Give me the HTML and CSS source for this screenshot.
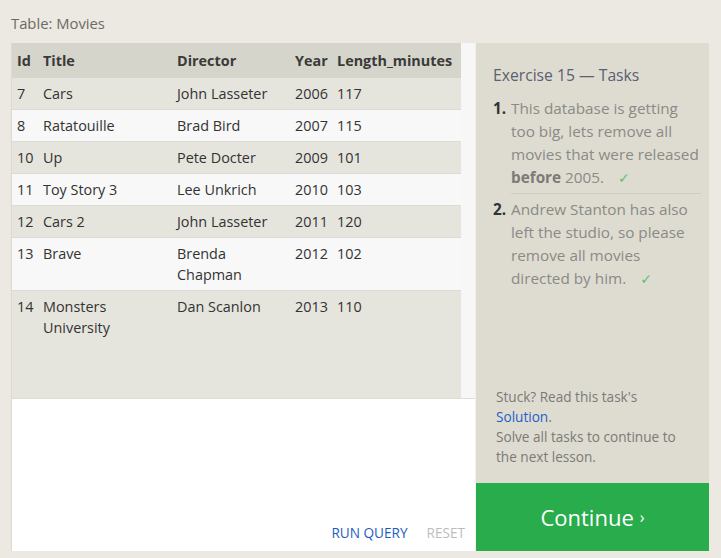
FILE: index.html
```html
<!DOCTYPE html>
<html>
<head>
<meta charset="utf-8">
<link rel="stylesheet" href="styles.css">
</head>
<body>
<div class="page">
  <div class="table-label">Table: Movies</div>
  <div class="main">
    <div class="left">
      <div class="table-area">
        <div class="table-scroll">
          <table class="movies">
            <colgroup>
              <col class="c-id"><col class="c-title"><col class="c-dir"><col class="c-year"><col class="c-len">
            </colgroup>
            <thead>
              <tr><th>Id</th><th>Title</th><th>Director</th><th>Year</th><th>Length_minutes</th></tr>
            </thead>
            <tbody>
              <tr class="odd"><td>7</td><td>Cars</td><td>John Lasseter</td><td>2006</td><td>117</td></tr>
              <tr class="even"><td>8</td><td>Ratatouille</td><td>Brad Bird</td><td>2007</td><td>115</td></tr>
              <tr class="odd"><td>10</td><td>Up</td><td>Pete Docter</td><td>2009</td><td>101</td></tr>
              <tr class="even"><td>11</td><td>Toy Story 3</td><td>Lee Unkrich</td><td>2010</td><td>103</td></tr>
              <tr class="odd"><td>12</td><td>Cars 2</td><td>John Lasseter</td><td>2011</td><td>120</td></tr>
              <tr class="even"><td>13</td><td>Brave</td><td>Brenda<br>Chapman</td><td>2012</td><td>102</td></tr>
              <tr class="odd last"><td>14</td><td>Monsters<br>University</td><td>Dan Scanlon</td><td>2013</td><td>110</td></tr>
            </tbody>
          </table>
        </div>
        <div class="scrollbar"></div>
      </div>
      <div class="editor">
        <div class="editor-actions">
          <span class="run">RUN QUERY</span>
          <span class="reset">RESET</span>
        </div>
      </div>
    </div>
    <div class="right">
      <div class="tasks">
        <h2 class="tasks-title">Exercise 15 — Tasks</h2>
        <ol class="task-list">
          <li class="task"><div class="num">1.</div><div class="task-text">This database is getting too big, lets remove all movies that were released <b>before</b> 2005. <span class="check">✓</span></div></li>
          <li class="task"><div class="num">2.</div><div class="task-text">Andrew Stanton has also left the studio, so please remove all movies <span>directed by him.</span> <span class="check">✓</span></div></li>
        </ol>
      </div>
      <div class="help">
        Stuck? Read this task's <span class="link">Solution</span>.<br>
        Solve all tasks to continue to the next lesson.
      </div>
      <div class="continue">Continue <span class="chev">›</span></div>
    </div>
  </div>
</div>
</body>
</html>
```

FILE: styles.css
```css
html, body {
  margin: 0;
  padding: 0;
}
body {
  background: #ece8e2;
  font-family: "Open Sans", "DejaVu Sans", sans-serif;
  color: #333;
  width: 721px;
  height: 558px;
  overflow: hidden;
}
.page {
  padding: 12px 12px 0 11px;
}
.table-label {
  font-size: 14.8px;
  color: #6b6b66;
  height: 31px;
  line-height: 22px;
}
.main {
  display: flex;
  width: 698px;
  height: 508px;
  border-left: 1px solid #dcd9d0;
  box-sizing: border-box;
}
.left {
  width: 463px;
  display: flex;
  flex-direction: column;
  border-right: 1px solid #f2f1ec;
}
.table-area {
  height: 355px;
  display: flex;
  background: #e6e5dd;
  border-bottom: 1px solid #dedcd4;
}
.table-scroll {
  width: 449px;
  background: #e6e5dd;
}
.scrollbar {
  width: 14px;
  background: #f7f7f7;
}
.movies {
  border-collapse: collapse;
  width: 449px;
  table-layout: fixed;
  font-size: 14.4px;
}
.c-id { width: 26px; }
.c-title { width: 134px; }
.c-dir { width: 118px; }
.c-year { width: 42px; }
.c-len { width: 129px; }
.movies th {
  background: #d6d5cb;
  text-align: left;
  font-weight: bold;
  color: #3a3a38;
  padding: 0 0 0 5px;
  height: 35px;
  white-space: nowrap;
}
.movies td {
  padding: 5px 0 5px 5px;
  line-height: 21px;
  vertical-align: top;
  color: #333;
  border-bottom: 1px solid #dcdbd4;
}
.movies tr.odd td { background: #e6e5dd; }
.movies tr.even td { background: #f8f8f8; }
.movies tr.last td { border-bottom: none; }
.editor {
  flex: 1;
  background: #fff;
  display: flex;
  align-items: flex-end;
  justify-content: flex-end;
}
.editor-actions {
  display: flex;
  gap: 19px;
  padding: 0 10px 9px 0;
  font-size: 13.6px;
}
.run { color: #1e5bbf; }
.reset { color: #bdbdbd; }
.right {
  flex: 1;
  background: #dedcd1;
  display: flex;
  flex-direction: column;
}
.tasks {
  padding: 20px 8px 0 17px;
  flex: 1;
}
.tasks-title {
  margin: 0 0 10px 0;
  font-size: 15.7px;
  font-weight: normal;
  color: #596072;
  line-height: 24px;
}
.task-list {
  list-style: none;
  margin: 0;
  padding: 0;
}
.task {
  display: flex;
  font-size: 15.3px;
  line-height: 23px;
  color: #8a8a86;
}
.task + .task {
  margin-top: 4px;
}
.task + .task .task-text {
  border-top: 1px solid #cfccc2;
  padding-top: 4px;
}
.task + .task .num {
  padding-top: 5px;
}
.num {
  width: 18px;
  flex: none;
  font-weight: bold;
  color: #333;
}
.task-text {
  flex: 1;
}
.task-text b { color: #7b7b77; }
.check {
  display: inline-block;
  font-family: "DejaVu Sans", sans-serif;
  font-size: 14px;
  line-height: 16px;
  color: #5cc27a;
  margin-left: 10px;
}
.help {
  padding: 0 18px 16px 20px;
  font-size: 13.6px;
  line-height: 20px;
  color: #7a7a76;
}
.link { color: #1f5fc9; }
.continue {
  height: 68px;
  background: #28ac4c;
  color: #fff;
  font-size: 22px;
  display: flex;
  align-items: center;
  justify-content: center;
}
.chev {
  font-size: 16px;
  margin-left: 6px;
}
```
